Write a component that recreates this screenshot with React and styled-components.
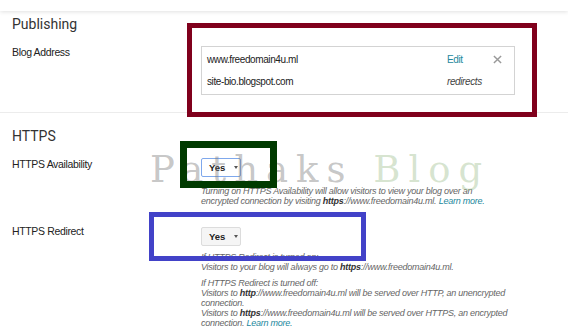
import styled, { createGlobalStyle } from 'styled-components'

const GlobalStyle = createGlobalStyle`
  html, body { margin:0; padding:0; background:#fff; }
  body {
    width:568px;
    height:336px;
    overflow:hidden;
    font-family:"Liberation Sans", Arial, sans-serif;
    color:#222;
  }
`

const Page = styled.div`
  position:relative;
  width:568px;
  height:336px;
  overflow:hidden;
`

const TopBar = styled.div`
  height:11px;
  background:#fff;
  box-shadow:0 1px 4px rgba(0,0,0,0.12);
`

const Section = styled.section`
  padding:${p => p.top}px 0 ${p => p.bottom}px 12px;
  border-bottom:${p => p.divider ? '1px solid #ececec' : 'none'};
`

const Heading = styled.h2`
  margin:0;
  font-family:Roboto, "Liberation Sans", sans-serif;
  font-weight:400;
  font-size:14px;
  line-height:20px;
  color:#333;
`

const Row = styled.div`
  display:grid;
  grid-template-columns:189px 1fr;
  margin-top:${p => p.gap}px;
`

const Label = styled.div`
  font-size:10.5px;
  line-height:12px;
  letter-spacing:-0.35px;
  color:#222;
  margin-top:${p => p.shift || 0}px;
`

const AddressBox = styled.div`
  width:307px;
  border:1px solid #d3d3d3;
  padding:1px 0 2px 5px;
`

const AddressRow = styled.div`
  display:grid;
  grid-template-columns:240px 36px 28px;
  align-items:center;
  height:22px;
  font-size:10px;
  letter-spacing:-0.4px;
  color:#222;
`

const Link = styled.a`
  color:#22889c;
  text-decoration:none;
`

const Note = styled.span`
  font-style:italic;
  color:#444;
`

const RemoveIcon = styled.svg`
  justify-self:center;
  width:9px;
  height:9px;
`

const Select = styled.button`
  display:flex;
  align-items:center;
  gap:9px;
  width:40px;
  height:19px;
  padding:0 0 0 7px;
  border:1px solid ${p => p.focused ? '#7fa8ec' : '#dcdcdc'};
  background:${p => p.focused ? '#fff' : '#f5f5f5'};
  border-radius:2px;
  font-family:"Liberation Sans", Arial, sans-serif;
  font-weight:bold;
  font-size:9.5px;
  color:#222;
`

const Caret = styled.span`
  width:0;
  height:0;
  border-left:2.5px solid transparent;
  border-right:2.5px solid transparent;
  border-top:3px solid #555;
`

const Help = styled.div`
  margin-top:${p => p.gap}px;
  font-style:italic;
  font-size:9px;
  line-height:10px;
  letter-spacing:-0.25px;
  color:#666;
  b { color:#333; }
  p { margin:0 0 6px; }
  p:last-child { margin-bottom:0; }
`

const Watermark = styled.div`
  position:absolute;
  left:150px;
  top:151px;
  font-family:"DejaVu Serif", "Liberation Serif", serif;
  font-size:37px;
  line-height:1;
  letter-spacing:8px;
  white-space:nowrap;
  pointer-events:none;
`

const Mark = styled.span`
  color:${p => p.tint};
`

const Annotation = styled.div`
  position:absolute;
  box-sizing:border-box;
  border:${p => p.weight}px solid ${p => p.color};
`

function SelectBox({ focused }) {
  return (
    <Select focused={focused}>
      Yes
      <Caret />
    </Select>
  )
}

export default function App() {
  return (
    <Page>
      <GlobalStyle />
      <TopBar />
      <Section top={3} bottom={17} divider>
        <Heading>Publishing</Heading>
        <Row gap={12}>
          <Label>Blog Address</Label>
          <AddressBox>
            <AddressRow>
              <span>www.freedomain4u.ml</span>
              <Link>Edit</Link>
              <RemoveIcon viewBox="0 0 10 10">
                <path d="M1 1 L9 9 M9 1 L1 9" stroke="#999" strokeWidth="1.6" />
              </RemoveIcon>
            </AddressRow>
            <AddressRow>
              <span>site-bio.blogspot.com</span>
              <Note>redirects</Note>
            </AddressRow>
          </AddressBox>
        </Row>
      </Section>
      <Section top={13} bottom={0}>
        <Heading>HTTPS</Heading>
        <Row gap={12}>
          <Label>HTTPS Availability</Label>
          <div>
            <SelectBox focused />
            <Help gap={9}>
              <p>
                Turning on HTTPS Availability will allow visitors to view your blog over an<br />
                encrypted connection by visiting <b>https</b>://www.freedomain4u.ml. <Link>Learn more.</Link>
              </p>
            </Help>
          </div>
        </Row>
        <Row gap={21}>
          <Label shift={-2}>HTTPS Redirect</Label>
          <div>
            <SelectBox />
            <Help gap={6}>
              <p>
                If HTTPS Redirect is turned on:<br />
                Visitors to your blog will always go to <b>https</b>://www.freedomain4u.ml.
              </p>
              <p>
                If HTTPS Redirect is turned off:<br />
                Visitors to <b>http</b>://www.freedomain4u.ml will be served over HTTP, an unencrypted<br />
                connection.<br />
                Visitors to <b>https</b>://www.freedomain4u.ml will be served over HTTPS, an encrypted<br />
                connection. <Link>Learn more.</Link>
              </p>
            </Help>
          </div>
        </Row>
      </Section>

      <Watermark>
        <Mark tint="rgba(120,120,120,0.42)">Pathaks </Mark>
        <Mark tint="rgba(150,185,130,0.38)">Blog</Mark>
      </Watermark>

      <Annotation color="#80001c" weight={5} style={{ left: 187, top: 23, width: 350, height: 94 }} />
      <Annotation color="#003a00" weight={7} style={{ left: 180, top: 141, width: 97, height: 47 }} />
      <Annotation color="#4242c8" weight={5} style={{ left: 149, top: 212, width: 217, height: 49 }} />
    </Page>
  )
}
